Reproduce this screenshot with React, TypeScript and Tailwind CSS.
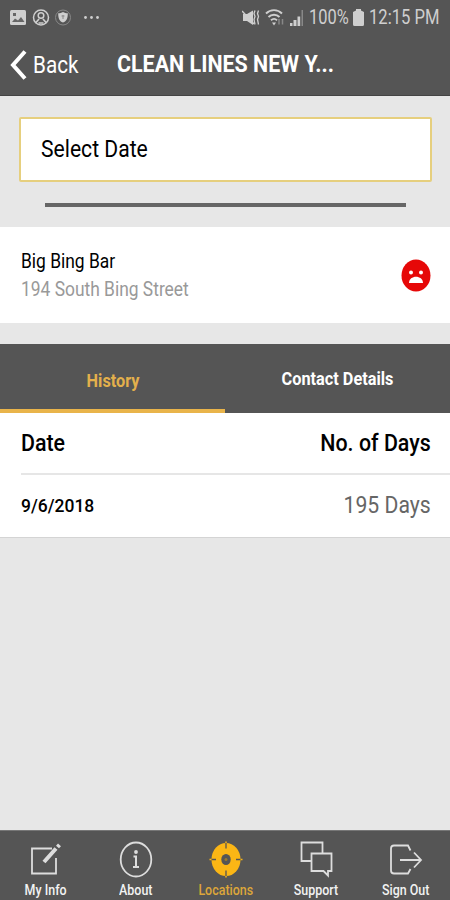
import { useState } from "react";

const TABS = ["History", "Contact Details"];

const VISITS = [{ date: "9/6/2018", days: 195 }];

function StatusBar() {
  return (
    <div className="flex h-[35px] items-center justify-between pl-[9px] pr-[11px] text-[#cfcfcf]">
      <div className="flex items-center">
        <svg width="18" height="18" viewBox="0 0 18 18">
          <rect x="1" y="1" width="16" height="15" rx="1.500" fill="currentColor" />
          <path d="M3 13 6 9.500l3 2 3-3.500 3.500 5zM4 4h3v3H4z" fill="#666" />
        </svg>
        <svg className="ml-[5px]" width="18" height="18" viewBox="0 0 18 18" fill="none" stroke="currentColor">
          <circle cx="9" cy="8.500" r="7.500" strokeWidth="1.500" />
          <circle cx="9" cy="6.500" r="2.800" strokeWidth="1.500" />
          <path d="M3.500 14 7 10M14.500 14 11 10M6.500 14h5" strokeWidth="1.700" />
        </svg>
        <svg className="ml-[4px]" width="18" height="18" viewBox="0 0 18 18">
          <circle cx="9" cy="8.500" r="7.500" fill="none" stroke="#888" />
          <path d="M9 3c1.500.9 3 1.200 4.800 1.200 0 4.800-1 7.800-4.800 9.300-3.800-1.500-4.800-4.500-4.800-9.300 1.800 0 3.300-.3 4.800-1.200z" fill="currentColor" />
          <path d="M9 6v4M7.500 7h3" stroke="#888" />
        </svg>
        <svg className="ml-[11px]" width="18" height="6" viewBox="0 0 18 6" fill="currentColor">
          <circle cx="2.500" cy="2.500" r="1.400" />
          <circle cx="8.500" cy="2.500" r="1.400" />
          <circle cx="14.500" cy="2.500" r="1.400" />
        </svg>
      </div>
      <div className="flex items-center">
        <svg width="18" height="18" viewBox="0 0 18 18">
          <path d="M1 5h4L11 1.500v14.500L5 12H1z" fill="currentColor" />
          <path d="M0 2l12 13" stroke="currentColor" strokeWidth="1.500" />
          <path d="M13 1.500l-1 3 1 3-1 3 1 5M16.500 1.500l-1 3 1 3-1 3 1 5" fill="none" stroke="currentColor" strokeWidth="1.300" />
        </svg>
        <svg className="ml-[5px]" width="20" height="18" viewBox="0 0 20 18" fill="none" stroke="currentColor" strokeWidth="1.900">
          <path d="M1 4.500c4.500-4.500 11.500-4.500 16 0M3.500 8c3-3 8-3 11 0M6 11.300c2-1.900 4.200-1.900 6 0" />
          <path d="M7 13.500h4l-2 3z" fill="currentColor" stroke="none" />
          <path d="M14 10v5.500M17.500 10v5.500" stroke="#888" strokeWidth="1.500" />
        </svg>
        <svg className="ml-[4px]" width="16" height="18" viewBox="0 0 16 18" fill="currentColor">
          <path d="M1 14h2.500v3H1zM4.500 11h3v6h-3zM8.500 7.500h2.700V17H8.500z" />
          <path d="M12.500 1H14v16h-1.500z" fill="#888" />
        </svg>
        <div className="ml-[4px] w-[40px]">
          <span className="inline-block origin-left translate-y-px scale-x-[0.82] whitespace-nowrap text-[20px] leading-none">100%</span>
        </div>
        <svg className="ml-[4px]" width="11" height="18" viewBox="0 0 11 18">
          <path d="M3 0h5v1.500l3 1.500V15.500q0 1.500-1.500 1.500h-8Q0 17 0 15.500V3l3-1.500z" fill="currentColor" />
        </svg>
        <div className="ml-[5px] w-[70px]">
          <span className="inline-block origin-left translate-y-px scale-x-[0.83] whitespace-nowrap text-[20px] leading-none">12:15 PM</span>
        </div>
      </div>
    </div>
  );
}

function Header() {
  return (
    <header className="h-[96px] border-b border-[#444] bg-[#555] text-white">
      <StatusBar />
      <div className="flex h-[60px] items-center">
        <button className="flex w-[117px] items-center pl-[10px]">
          <svg width="17" height="30" viewBox="0 0 17 30" fill="none" stroke="currentColor" strokeWidth="4">
            <path d="M15 1.500 3 15l12 13.500" />
          </svg>
          <span className="ml-[6px] inline-block origin-left scale-x-[0.9] whitespace-nowrap text-[23px] leading-none">Back</span>
        </button>
        <h1 className="origin-left scale-x-[0.932] whitespace-nowrap pb-[1px] text-[23px] font-bold leading-none">CLEAN LINES NEW Y...</h1>
      </div>
    </header>
  );
}

function SadFace() {
  return (
    <svg width="30" height="33" viewBox="0 0 30 33">
      <ellipse cx="15" cy="16.500" rx="14.500" ry="16" fill="#e60808" />
      <circle cx="10" cy="13.500" r="2" fill="#fff" />
      <circle cx="20" cy="13.500" r="2" fill="#fff" />
      <path d="M8 24c0-8.500 14-8.500 14 0z" fill="#fff" />
    </svg>
  );
}

function TabBar() {
  const items = [
    {
      label: "My Info",
      icon: (
        <>
          <path d="M24 7.500H4v25h24V17" />
          <path d="M16 21 28 7.500M29.500 6l2-2.200" strokeWidth="4" />
        </>
      ),
    },
    {
      label: "About",
      icon: (
        <>
          <ellipse cx="18" cy="18.500" rx="15.300" ry="17" />
          <path d="M15.500 15.500h2.500v10.500M15 26h6" strokeWidth="2" />
          <circle cx="18" cy="11" r="1" />
        </>
      ),
    },
    {
      label: "Locations",
      active: true,
      icon: (
        <>
          <ellipse cx="18" cy="18.500" rx="14.500" ry="16.500" fill="#fbb615" stroke="none" />
          <path d="M18 .5v36M1.500 18.500h33" stroke="#fbb615" strokeWidth="1.500" />
          <path d="M18 2v5.500M18 29.500V35M3.500 18.500H8M28 18.500h4.500" stroke="#555" strokeWidth="1.300" />
          <ellipse cx="18" cy="18.500" rx="4.700" ry="5.500" fill="#555" stroke="none" />
          <circle cx="18" cy="18.500" r="1.500" fill="#99792c" stroke="none" />
        </>
      ),
    },
    {
      label: "Support",
      icon: (
        <>
          <path d="M13 20H3.500V1.500h21V12" />
          <path d="M13.500 12.500h20v17.500H30v4.500L25.500 30h-12z" />
        </>
      ),
    },
    {
      label: "Sign Out",
      icon: (
        <>
          <path d="M22.500 9.500 20 4.500H6q-3 0-3 3v22q0 3 3 3h14l2.500-4.500" />
          <path d="M12 19h21M26 11.500l7 7.500-7 7.500" />
        </>
      ),
    },
  ];

  return (
    <nav className="grid h-[70px] grid-cols-5 border-t border-[#777] bg-[#555]">
      {items.map((item) => (
        <button
          key={item.label}
          className={`flex flex-col items-center pl-[1px] pt-[10px] ${item.active ? "text-[#dda63a]" : "text-[#f2f2f2]"}`}
        >
          <svg width="36" height="37" viewBox="0 0 36 37" fill="none" stroke="#ddd" strokeWidth="1.800">
            {item.icon}
          </svg>
          <span className="mt-[4px] inline-block scale-x-[0.89] whitespace-nowrap text-[14px] font-medium leading-[16px]">{item.label}</span>
        </button>
      ))}
    </nav>
  );
}

export default function App() {
  const [tab, setTab] = useState("History");

  return (
    <div className="flex h-[900px] w-[450px] flex-col overflow-hidden bg-[#e7e7e7] font-[Roboto,sans-serif] text-black">
      <Header />

      <section className="flex h-[131px] flex-col px-[19px] pt-[21px]">
        <button className="flex h-[65px] w-[413px] items-center rounded-[2px] border-2 border-[#e6cf7e] bg-white pb-[2px] pl-[20px]">
          <span className="origin-left scale-x-[0.88] whitespace-nowrap text-[24px] leading-none">Select Date</span>
        </button>
        <div className="ml-[26px] mt-[21px] h-[4px] w-[361px] bg-[#666]" />
      </section>

      <section className="flex h-[96px] items-center justify-between bg-white pl-[21px] pr-[19px]">
        <div>
          <div className="origin-left scale-x-[0.87] whitespace-nowrap pt-[1px] text-[20px] leading-[27px]">Big Bing Bar</div>
          <div className="origin-left scale-x-[0.87] whitespace-nowrap text-[20px] leading-[28px] text-[#999]">194 South Bing Street</div>
        </div>
        <SadFace />
      </section>

      <div className="mt-[21px] grid h-[69px] grid-cols-2 bg-[#555]">
        {TABS.map((t) => (
          <button
            key={t}
            onClick={() => setTab(t)}
            className={`border-b-4 text-[18.5px] font-bold leading-none ${t === tab ? "border-[#e9b44a] pt-[9px] pl-[2px] text-[#e3b04c]" : "border-[#555] pt-[5px] text-white"}`}
          >
            <span className="inline-block scale-x-[0.88] whitespace-nowrap">{t}</span>
          </button>
        ))}
      </div>

      <section className="border-b border-[#d4d4d4] bg-white">
        <div className="ml-[21px] flex h-[62px] items-center justify-between border-b-2 border-[#e6e6e6] pr-[19px] text-[23px] font-medium leading-none">
          <span className="origin-left scale-x-[0.93] whitespace-nowrap">Date</span>
          <span className="origin-right scale-x-[0.93] whitespace-nowrap">No. of Days</span>
        </div>
        {VISITS.map((v) => (
          <div key={v.date} className="flex h-[62px] items-center justify-between pb-[2px] pl-[21px] pr-[19px] leading-none">
            <span className="origin-left scale-x-[0.92] whitespace-nowrap text-[19px] font-medium">{v.date}</span>
            <span className="origin-right scale-x-[0.92] whitespace-nowrap text-[23px] text-[#666]">{v.days} Days</span>
          </div>
        ))}
      </section>

      <div className="flex-1" />
      <TabBar />
    </div>
  );
}
